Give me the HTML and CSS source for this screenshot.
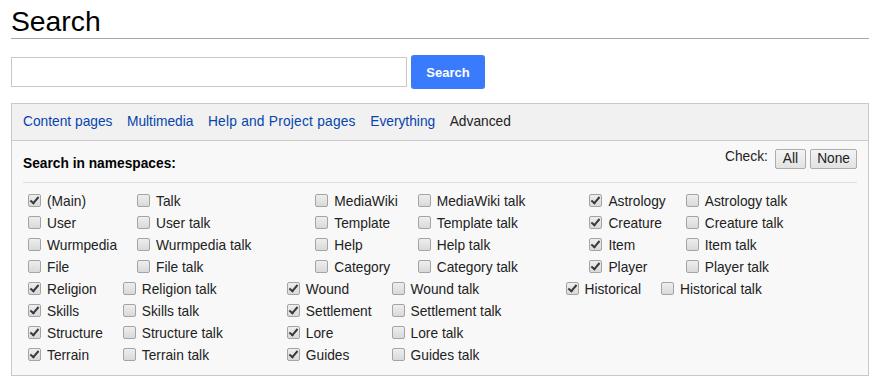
FILE: index.html
```html
<!DOCTYPE html>
<html lang="en">
<head>
<meta charset="utf-8">
<title>Search</title>
<link rel="stylesheet" href="styles.css">
</head>
<body>
<div class="page">
  <h1 class="title">Search</h1>
  <form class="search-row">
    <input class="search-input" type="text" aria-label="Search">
    <button class="search-btn" type="button">Search</button>
  </form>
  <div class="panel">
    <div class="types">
      <a class="type-link" href="#">Content pages</a>
      <a class="type-link" href="#">Multimedia</a>
      <a class="type-link wide" href="#">Help and Project pages</a>
      <a class="type-link" href="#">Everything</a>
      <span class="type-current">Advanced</span>
    </div>
    <div class="panel-body">
      <div class="ns-head">
        <div class="ns-title">Search in namespaces:</div>
        <div class="toggles">
          <span class="check-label">Check:</span>
          <button class="small-btn" type="button">All</button>
          <button class="small-btn" type="button">None</button>
        </div>
      </div>
      <div class="divider"></div>

      <div class="ns-table">
        <div class="ns-cell"><span class="cb on"></span><span>(Main)</span></div>
        <div class="ns-cell talk"><span class="cb"></span><span>Talk</span></div>
        <div class="ns-cell"><span class="cb"></span><span>MediaWiki</span></div>
        <div class="ns-cell talk"><span class="cb"></span><span>MediaWiki talk</span></div>
        <div class="ns-cell"><span class="cb on"></span><span>Astrology</span></div>
        <div class="ns-cell talk"><span class="cb"></span><span>Astrology talk</span></div>

        <div class="ns-cell"><span class="cb"></span><span>User</span></div>
        <div class="ns-cell talk"><span class="cb"></span><span>User talk</span></div>
        <div class="ns-cell"><span class="cb"></span><span>Template</span></div>
        <div class="ns-cell talk"><span class="cb"></span><span>Template talk</span></div>
        <div class="ns-cell"><span class="cb on"></span><span>Creature</span></div>
        <div class="ns-cell talk"><span class="cb"></span><span>Creature talk</span></div>

        <div class="ns-cell"><span class="cb"></span><span>Wurmpedia</span></div>
        <div class="ns-cell talk"><span class="cb"></span><span>Wurmpedia talk</span></div>
        <div class="ns-cell"><span class="cb"></span><span>Help</span></div>
        <div class="ns-cell talk"><span class="cb"></span><span>Help talk</span></div>
        <div class="ns-cell"><span class="cb on"></span><span>Item</span></div>
        <div class="ns-cell talk"><span class="cb"></span><span>Item talk</span></div>

        <div class="ns-cell"><span class="cb"></span><span>File</span></div>
        <div class="ns-cell talk"><span class="cb"></span><span>File talk</span></div>
        <div class="ns-cell"><span class="cb"></span><span>Category</span></div>
        <div class="ns-cell talk"><span class="cb"></span><span>Category talk</span></div>
        <div class="ns-cell"><span class="cb on"></span><span>Player</span></div>
        <div class="ns-cell talk"><span class="cb"></span><span>Player talk</span></div>
      </div>

      <div class="ns-table">
        <div class="ns-cell"><span class="cb on"></span><span>Religion</span></div>
        <div class="ns-cell talk"><span class="cb"></span><span>Religion talk</span></div>
        <div class="ns-cell"><span class="cb on"></span><span>Wound</span></div>
        <div class="ns-cell talk"><span class="cb"></span><span>Wound talk</span></div>
        <div class="ns-cell"><span class="cb on"></span><span>Historical</span></div>
        <div class="ns-cell talk"><span class="cb"></span><span>Historical talk</span></div>

        <div class="ns-cell"><span class="cb on"></span><span>Skills</span></div>
        <div class="ns-cell talk"><span class="cb"></span><span>Skills talk</span></div>
        <div class="ns-cell"><span class="cb on"></span><span>Settlement</span></div>
        <div class="ns-cell talk"><span class="cb"></span><span>Settlement talk</span></div>
        <div class="ns-cell empty"></div>
        <div class="ns-cell empty"></div>

        <div class="ns-cell"><span class="cb on"></span><span>Structure</span></div>
        <div class="ns-cell talk"><span class="cb"></span><span>Structure talk</span></div>
        <div class="ns-cell"><span class="cb on"></span><span>Lore</span></div>
        <div class="ns-cell talk"><span class="cb"></span><span>Lore talk</span></div>
        <div class="ns-cell empty"></div>
        <div class="ns-cell empty"></div>

        <div class="ns-cell"><span class="cb on"></span><span>Terrain</span></div>
        <div class="ns-cell talk"><span class="cb"></span><span>Terrain talk</span></div>
        <div class="ns-cell"><span class="cb on"></span><span>Guides</span></div>
        <div class="ns-cell talk"><span class="cb"></span><span>Guides talk</span></div>
        <div class="ns-cell empty"></div>
        <div class="ns-cell empty"></div>
      </div>
    </div>
  </div>
</div>
</body>
</html>
```
FILE: styles.css
```css
* { box-sizing: border-box; }

html, body {
  margin: 0;
  padding: 0;
  background: #ffffff;
}

body {
  font-family: "Liberation Sans", Arial, sans-serif;
  font-size: 13.75px;
  color: #222222;
}

.page {
  padding: 0 8px 0 11px;
}

.title {
  margin: 4px 0 0 0;
  font-size: 28.3px;
  font-weight: normal;
  line-height: 34px;
  color: #000000;
  border-bottom: 1px solid #a2a9b1;
}

.search-row {
  display: flex;
  align-items: center;
  gap: 4px;
  margin: 16px 0 0 0;
}

.search-input {
  width: 396px;
  height: 30px;
  margin: 0;
  border: 1px solid #c8c8c8;
  border-radius: 0;
  background: #ffffff;
  padding: 0 6px;
  font: inherit;
}

.search-btn {
  width: 74px;
  height: 34px;
  margin: 0;
  border: none;
  border-radius: 3px;
  background: #3a7bfd;
  color: #ffffff;
  font-family: "Liberation Sans", Arial, sans-serif;
  font-weight: bold;
  font-size: 13px;
  padding: 0;
}

.panel {
  margin-top: 14px;
  border: 1px solid #c8c8c8;
  background: #f8f8f8;
}

.types {
  display: flex;
  gap: 14.5px;
  height: 37px;
  padding: 0 11px;
  line-height: 36px;
  background: #f1f1f1;
  border-bottom: 1px solid #c8c8c8;
}

.type-link {
  color: #0645ad;
  text-decoration: none;
}

.type-link.wide {
  letter-spacing: 0.22px;
}

.type-current {
  color: #222222;
}

.panel-body {
  padding: 7px 11px 8px 11px;
}

.ns-head {
  display: flex;
  justify-content: space-between;
  align-items: flex-start;
  height: 25px;
}

.ns-title {
  margin-top: 7px;
  font-weight: bold;
  line-height: 18px;
  color: #000000;
}

.toggles {
  display: flex;
  align-items: center;
  gap: 4px;
}

.check-label {
  margin-right: 3px;
  line-height: 18px;
  padding-bottom: 4px;
}

.small-btn {
  height: 20px;
  margin: 0;
  padding: 0 6px;
  border: 1px solid #acacac;
  border-radius: 2px;
  background: linear-gradient(#f4f4f4, #e2e2e2);
  color: #222222;
  font-family: "Liberation Sans", Arial, sans-serif;
  font-size: 13.75px;
  line-height: 18px;
}

.small-btn:first-of-type {
  padding: 0 7px;
}

.divider {
  height: 1px;
  background: #dddddd;
  margin: 9px 0 8px 0;
}

.ns-table {
  display: grid;
  grid-template-columns: repeat(6, max-content);
}

.ns-cell {
  display: flex;
  align-items: flex-start;
  height: 22px;
  line-height: 22px;
  padding-left: 5px;
  padding-right: 15px;
  color: #222222;
}

.ns-cell.talk {
  padding-right: 59px;
}

.cb {
  flex: none;
  position: relative;
  width: 13px;
  height: 13px;
  margin: 3px 6px 0 0;
  border: 1px solid #a4a4a4;
  border-radius: 2px;
  background: linear-gradient(#eeeeee, #d9d9d9);
}

.cb.on::after {
  content: "";
  position: absolute;
  left: 3px;
  top: 0px;
  width: 3px;
  height: 7px;
  border: solid #3a3a3a;
  border-width: 0 2px 2px 0;
  transform: rotate(40deg);
}
```
